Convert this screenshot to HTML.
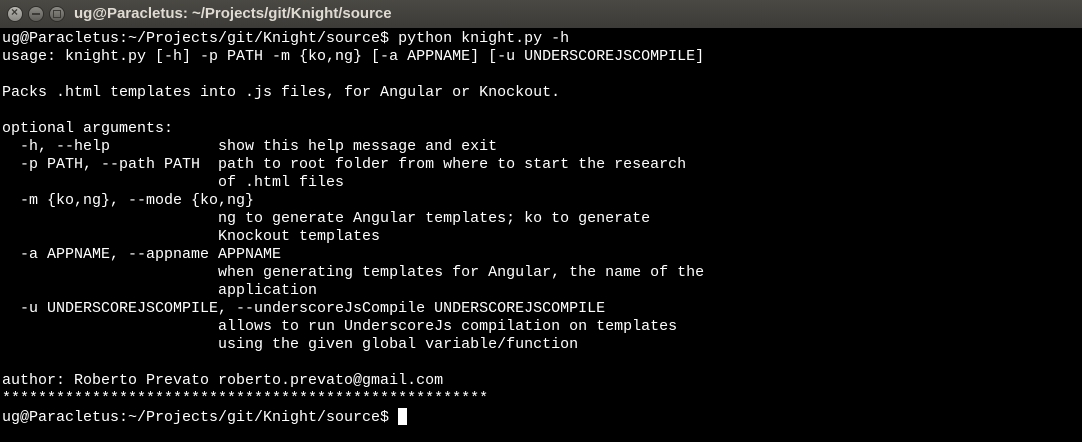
<!DOCTYPE html>
<html><head><style>
body{margin:0;width:1082px;height:442px;overflow:hidden;background:#000;}
#t{position:absolute;left:0;top:0;width:1082px;height:28px;background:linear-gradient(#4a4944,#3c3b37);}
.b{position:absolute;top:7px;width:14px;height:14px;border-radius:50%;background:linear-gradient(#8c8a85,#5d5c57);box-shadow:0 0 0 1px #2e2d2a;}
#tt{position:absolute;left:74px;top:5px;font:bold 15px "Liberation Sans",sans-serif;color:#dfdbd2;}
pre{position:absolute;left:2px;top:30px;margin:0;font:15px/18px "Liberation Mono",monospace;color:#fff;}
.c{display:inline-block;width:9px;height:17px;background:#fff;vertical-align:-4px;}
</style></head><body>
<div id="t">
<div class="b" style="left:8px;background:linear-gradient(#b8b6b0,#8a8883)"><span style="position:absolute;left:3px;top:-2px;font:bold 12px 'Liberation Sans';color:#3c3b37">×</span></div>
<div class="b" style="left:29px"><span style="position:absolute;left:3px;top:6px;width:8px;height:2px;background:#3c3b37"></span></div>
<div class="b" style="left:50px"><span style="position:absolute;left:3px;top:3px;width:6px;height:6px;border:1px solid #3c3b37"></span></div>
<div id="tt">ug@Paracletus: ~/Projects/git/Knight/source</div>
</div>
<pre>ug@Paracletus:~/Projects/git/Knight/source$ python knight.py -h
usage: knight.py [-h] -p PATH -m {ko,ng} [-a APPNAME] [-u UNDERSCOREJSCOMPILE]

Packs .html templates into .js files, for Angular or Knockout.

optional arguments:
  -h, --help            show this help message and exit
  -p PATH, --path PATH  path to root folder from where to start the research
                        of .html files
  -m {ko,ng}, --mode {ko,ng}
                        ng to generate Angular templates; ko to generate
                        Knockout templates
  -a APPNAME, --appname APPNAME
                        when generating templates for Angular, the name of the
                        application
  -u UNDERSCOREJSCOMPILE, --underscoreJsCompile UNDERSCOREJSCOMPILE
                        allows to run UnderscoreJs compilation on templates
                        using the given global variable/function

author: Roberto Prevato roberto.prevato@gmail.com
******************************************************
ug@Paracletus:~/Projects/git/Knight/source$ <span class="c"></span></pre>
</body></html>
